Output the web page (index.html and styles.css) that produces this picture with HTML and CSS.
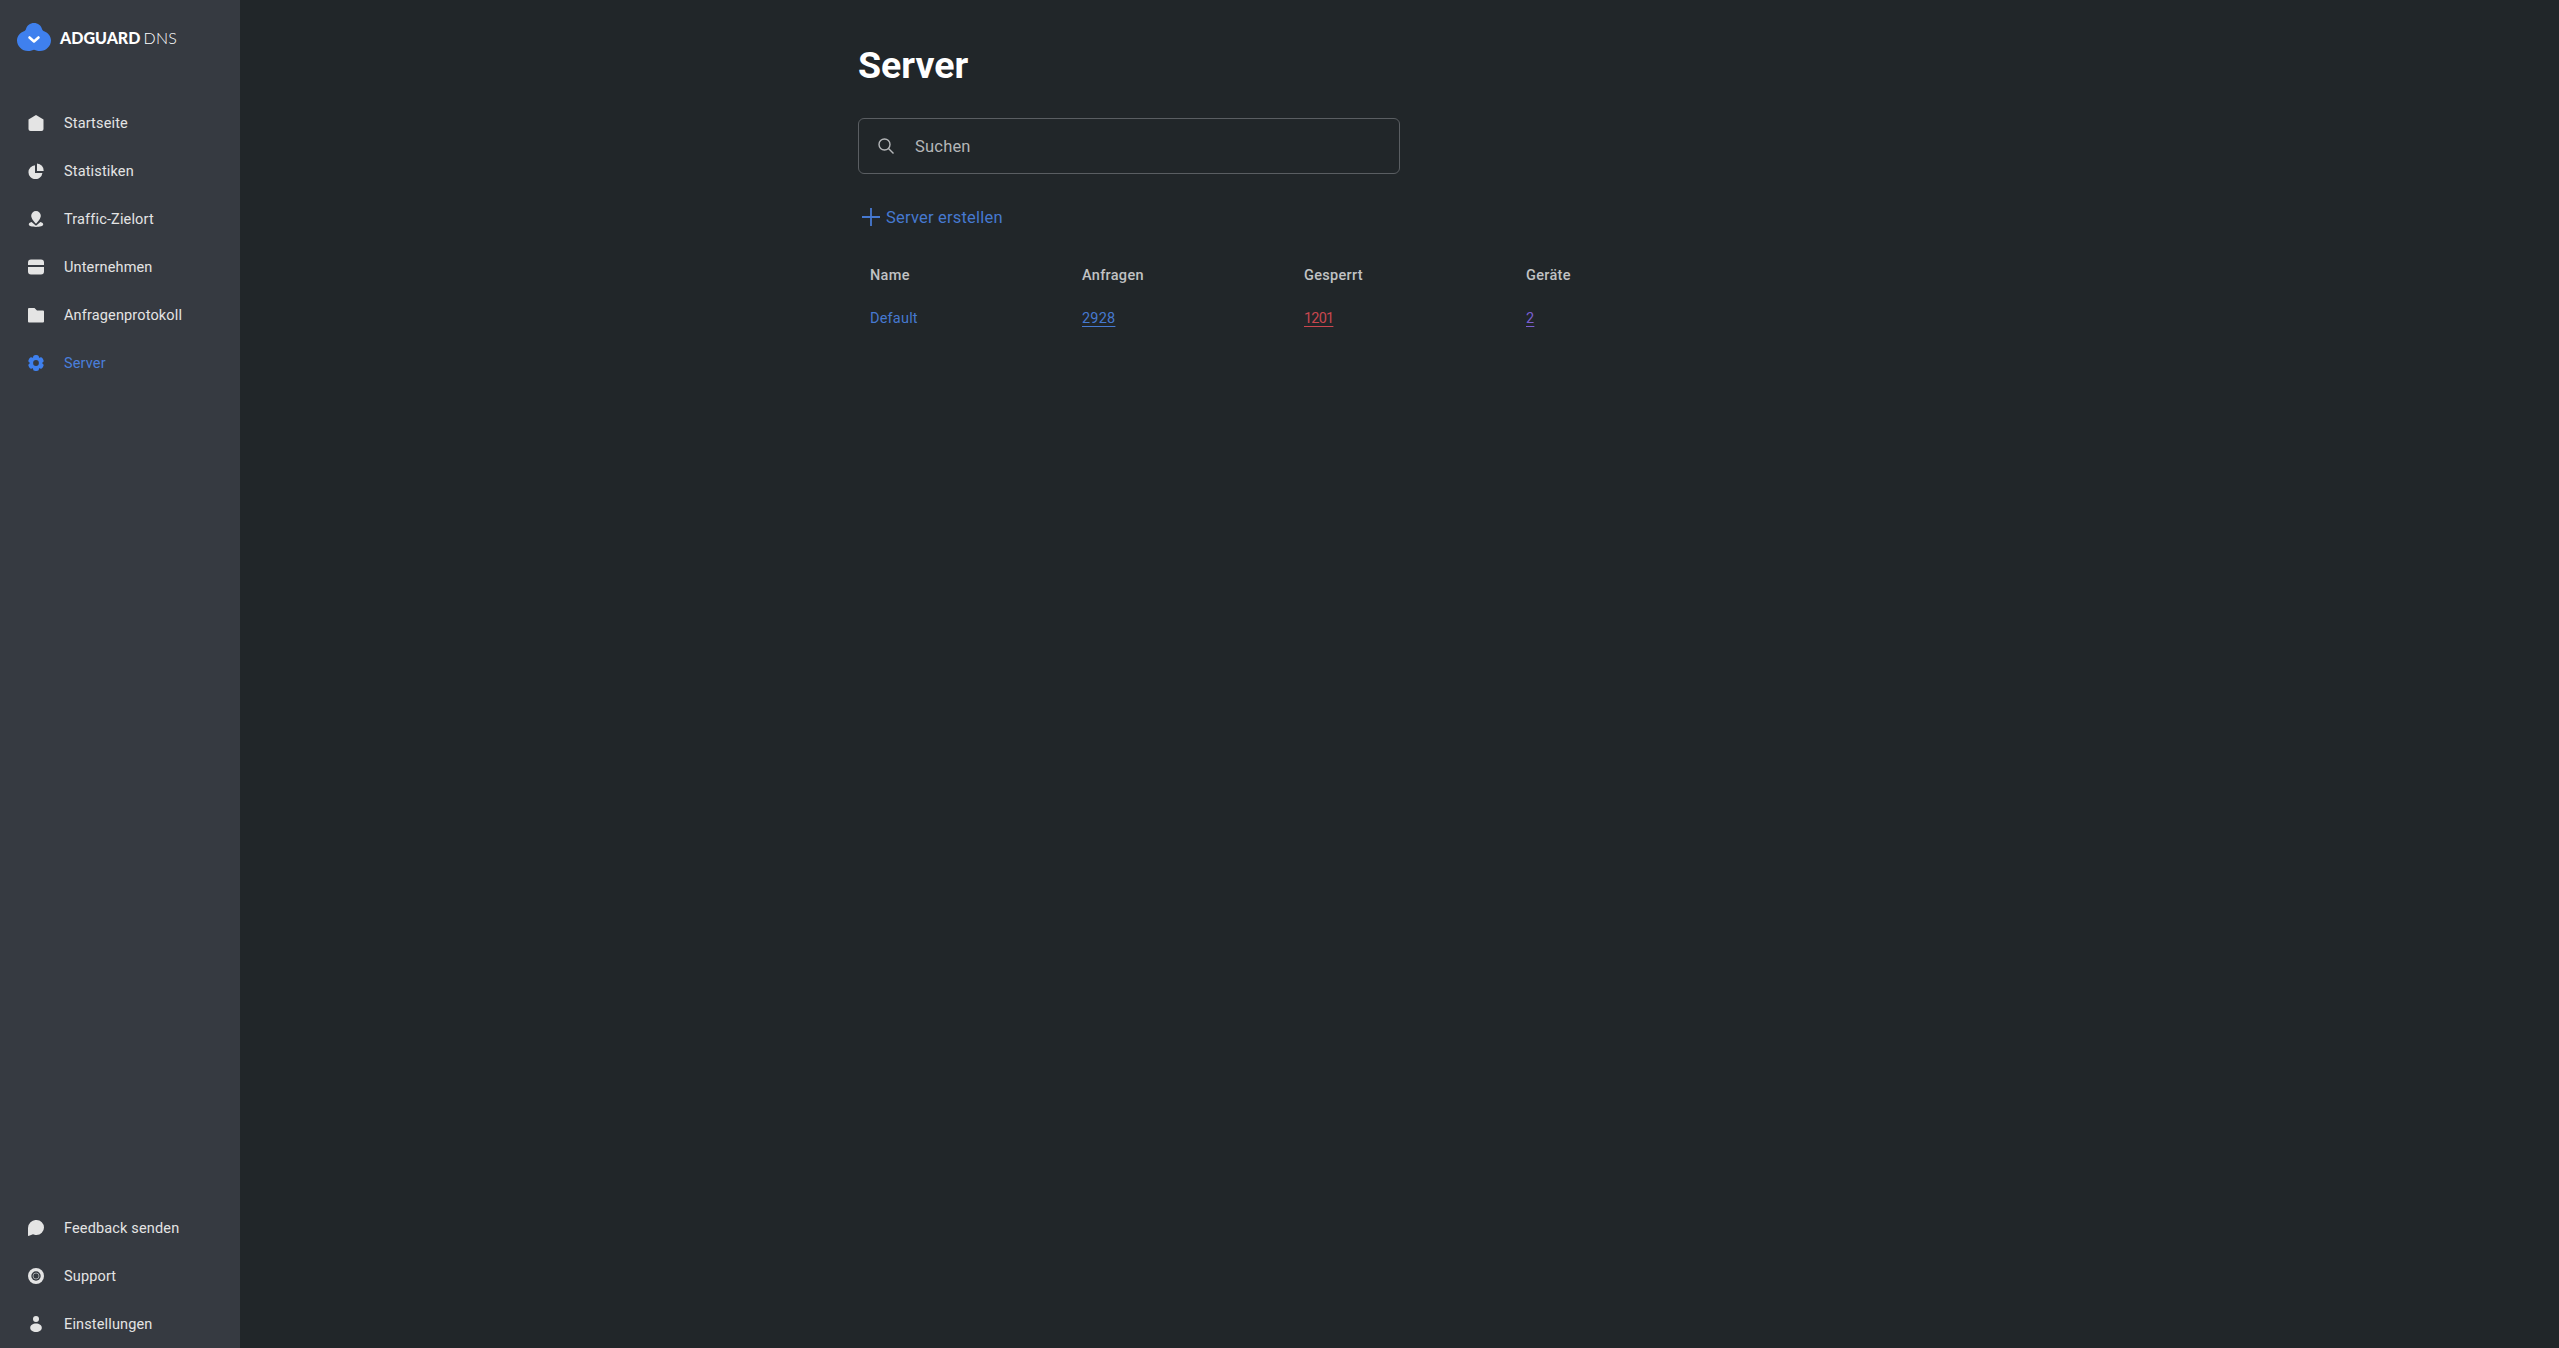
FILE: index.html
```html
<!DOCTYPE html>
<html lang="de">
<head>
<meta charset="utf-8">
<title>AdGuard DNS – Server</title>
<link rel="stylesheet" href="styles.css">
</head>
<body>
<div class="app">
  <aside class="sidebar">
    <div class="logo">
      <svg class="logo-mark" viewBox="0 0 36 29" width="36" height="29"><path fill="#3f80ee" d="M18 0c4 0 7 2.500 8 6 .2.900.6 1.400 1.500 1.900C32 9.500 35 13 35 17.500 35 23 30 28 24 28c-2.200 0-3.500-.3-6-1.200-2.500.9-3.800 1.200-6 1.200C6 28 1 23 1 17.500 1 13 4 9.500 8.500 7.900c.9-.5 1.300-1 1.500-1.900C11 2.500 14 0 18 0z"/><path fill="none" stroke="#fff" stroke-width="2.600" stroke-linecap="round" stroke-linejoin="round" d="M13.500 14.500l4.500 4 4.500-4"/></svg>
      <span class="logo-text"><b>ADGUARD</b><span>DNS</span></span>
    </div>
    <nav class="nav">
      <a class="nav-item"><svg class="ico" viewBox="0 0 16 16"><path d="M8 0l7.500 4.500V14a2 2 0 0 1-2 2h-11a2 2 0 0 1-2-2V4.500z"/></svg>Startseite</a>
      <a class="nav-item"><svg class="ico" viewBox="0 0 16 16"><path d="M7 2.200a7 7 0 1 0 7.400 7.800H7z"/><path d="M9 .5a7 7 0 0 1 6.600 7.500H9z"/></svg>Statistiken</a>
      <a class="nav-item"><svg class="ico" viewBox="0 0 16 16"><path d="M8 0a4.800 4.800 0 0 1 4.800 4.800c0 2.700-2.800 6-4.800 8-2-2-4.800-5.300-4.800-8A4.800 4.800 0 0 1 8 0z"/><path d="M3.600 11C1.500 11.600.8 12.500.8 13.600.8 15.200 4 16 8 16s7.200-.8 7.200-2.400c0-1.100-.7-2-2.800-2.600L8 14.800z"/></svg>Traffic-Zielort</a>
      <a class="nav-item"><svg class="ico" viewBox="0 0 16 16"><path d="M3 .5h10a3 3 0 0 1 3 3V6H0V3.500a3 3 0 0 1 3-3zM0 8h16v4.500a3 3 0 0 1-3 3H3a3 3 0 0 1-3-3z"/></svg>Unternehmen</a>
      <a class="nav-item"><svg class="ico" viewBox="0 0 16 16"><path d="M1 1h5.500l2.500 2.500h6a1 1 0 0 1 1 1V14.500a1 1 0 0 1-1 1H1a1 1 0 0 1-1-1V2a1 1 0 0 1 1-1z"/></svg>Anfragenprotokoll</a>
      <a class="nav-item active"><svg class="ico" viewBox="0 0 16 16"><circle cx="8" cy="8" r="6"/><rect x="5" y="0" width="6" height="16" rx="2.500"/><rect x="5" y="0" width="6" height="16" rx="2.500" transform="rotate(60 8 8)"/><rect x="5" y="0" width="6" height="16" rx="2.500" transform="rotate(120 8 8)"/><circle class="hole" cx="8" cy="8" r="2.900"/></svg>Server</a>
    </nav>
    <nav class="nav nav-bottom">
      <a class="nav-item"><svg class="ico" viewBox="0 0 16 16"><path d="M8.500 0a7.500 7.500 0 0 1 0 15c-1.500 0-2.500-.2-3.500-.7L.5 16c-.3-.1-.5-.2-.5-.5V8a8 8 0 0 1 8.500-8z"/></svg>Feedback senden</a>
      <a class="nav-item"><svg class="ico" viewBox="0 0 16 16"><circle cx="8" cy="8" r="8"/><circle class="hole" cx="8" cy="8" r="4.700"/><circle class="ring" cx="8" cy="8" r="3"/></svg>Support</a>
      <a class="nav-item"><svg class="ico" viewBox="0 0 16 16"><circle cx="8" cy="3" r="3"/><path d="M8 7.500c3.200 0 5.800 1.600 5.800 4.300S11.200 16 8 16s-5.800-1.500-5.800-4.200S4.800 7.500 8 7.500z"/></svg>Einstellungen</a>
    </nav>
  </aside>
  <main class="main">
    <h1 class="title">Server</h1>
    <div class="search">
      <svg class="search-ico" viewBox="0 0 16 16" width="16" height="16"><circle cx="6.500" cy="6.500" r="5.500"/><path d="M10.500 10.500l5 5"/></svg>
      <span class="search-text">Suchen</span>
    </div>
    <a class="create"><svg class="plus" viewBox="0 0 18 18" width="18" height="18"><path d="M9 0v18M0 9h18"/></svg>Server erstellen</a>
    <div class="table">
      <div class="cell head">Name</div>
      <div class="cell head">Anfragen</div>
      <div class="cell head">Gesperrt</div>
      <div class="cell head">Geräte</div>
      <div class="cell link-blue">Default</div>
      <div class="cell"><a class="num link-blue">2928</a></div>
      <div class="cell"><a class="num link-red">1201</a></div>
      <div class="cell"><a class="num link-purple">2</a></div>
    </div>
  </main>
</div>
</body>
</html>
```
FILE: styles.css
```css
* { box-sizing: border-box; }
html, body { margin: 0; height: 100%; }
body { background: #212629; font-family: "Roboto", "Inter", sans-serif; color: #e4e4e4; overflow: hidden; }
.app { display: flex; height: 100vh; }
.sidebar { width: 240px; flex: none; background: #363a41; display: flex; flex-direction: column; }
.logo { display: flex; align-items: center; gap: 8px; height: 29px; margin: 23px 0 0 16px; }
.logo-mark { flex: none; }
.logo-text { font-size: 16px; color: #fff; display: flex; gap: 3px; }
.logo-text b { font-family: "Lato", sans-serif; font-weight: 900; }
.logo-text span { font-family: "Lato", sans-serif; font-weight: 300; letter-spacing: .3px; }
.nav { display: flex; flex-direction: column; margin-top: 47px; }
.nav-bottom { margin-top: auto; }
.nav-item { display: flex; align-items: center; height: 48px; padding-left: 28px; gap: 20px; font-size: 14.500px; letter-spacing: .15px; color: #e4e4e4; white-space: nowrap; }
.ico { width: 16px; height: 16px; flex: none; fill: #e4e4e4; }
.hole { fill: #363a41; }
.ring { fill: none; stroke: #b8babc; stroke-width: .8; }
.active { color: #4a7fdb; }
.active .ico { fill: #3f80ee; }
.active .ico .hole { fill: #363a41; }
.main { flex: 1; padding-left: 618px; }
.title { margin: 41px 0 0; font-size: 37.500px; line-height: 48px; font-weight: 700; color: #fff; font-family: "Roboto", sans-serif; }
.search { width: 542px; height: 56px; margin-top: 29px; border: 1px solid #5a5e62; border-radius: 6px; display: flex; align-items: center; padding-left: 19px; gap: 21px; }
.search-ico { fill: none; stroke: #b4b6b8; stroke-width: 1.400; flex: none; }
.search-text { font-size: 16.500px; letter-spacing: .2px; color: #b4b6b8; }
.create { display: flex; align-items: center; gap: 6px; margin: 33px 0 0 4px; height: 20px; font-size: 16.500px; letter-spacing: .2px; color: #4679d0; }
.plus { stroke: #4679d0; stroke-width: 1.800; fill: none; flex: none; }
.table { display: grid; grid-template-columns: 212px 222px 222px 200px; grid-auto-rows: 43px; margin: 27px 0 0 12px; align-items: center; }
.cell { font-size: 14.500px; letter-spacing: .2px; }
.head { font-weight: 500; letter-spacing: .3px; color: #c0c2c4; }
.num { text-decoration: underline; text-underline-offset: 3px; }
.link-blue { color: #4679d0; }
.link-red { color: #c9474f; letter-spacing: -.8px; }
.link-purple { color: #7a5fd0; }
```
